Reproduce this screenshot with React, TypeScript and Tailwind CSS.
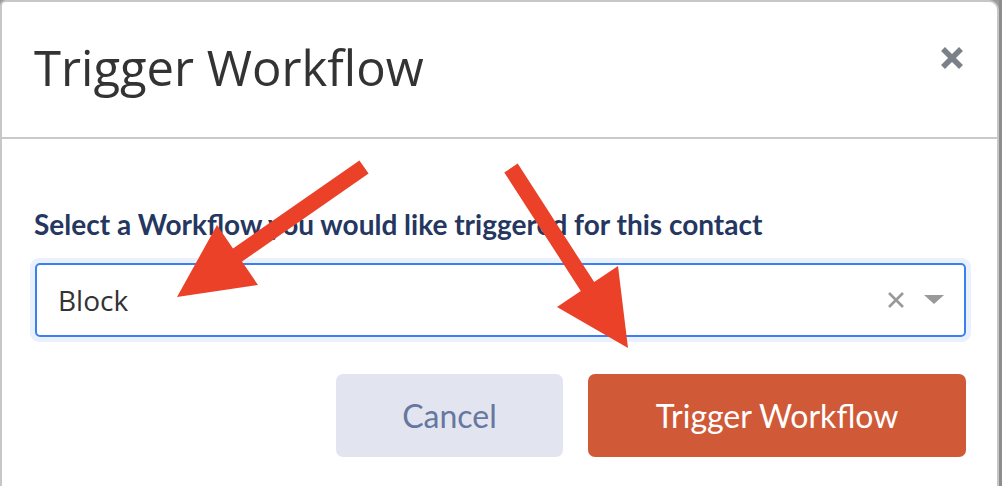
export default function App() {
  return (
    <div className="relative flex w-[1002px] h-[486px] overflow-hidden bg-[#9b9b9b]">
      <div className="flex flex-col w-[999px] h-[520px] bg-white border-l-2 border-t-2 border-r-2 border-[#c7c7c7] rounded-tl-[6px] rounded-tr-[10px]">
        <div className="flex items-center justify-between h-[137px] pl-[32px] pr-[33px] border-b-2 border-[#c9c9c9]">
          <h1 className="text-[49px] leading-none font-medium text-[#333333] font-['Open_Sans',sans-serif] pb-[4px]">
            Trigger Workflow
          </h1>
          <svg width="24" height="24" viewBox="0 0 24 24" className="mb-[24px]">
            <path d="M3 3 L21 21 M21 3 L3 21" stroke="#7b8188" strokeWidth="5.5" strokeLinecap="butt" />
          </svg>
        </div>
        <div className="flex flex-col pt-[71px] pl-[28px] pr-[26px]">
          <label className="pl-[4px] text-[28px] leading-none font-bold text-[#253761] font-['Lato',sans-serif]">
            Select a Workflow you would like triggered for this contact
          </label>
          <div className="mt-[20px] p-[5px] rounded-[9px] bg-[#eaf1fd]">
            <div className="flex items-center h-[74px] pl-[21px] pr-[20px] rounded-[5px] border-2 border-[#3a80f0] bg-white">
              <span className="flex-1 text-[28px] text-[#333333] font-['Open_Sans',sans-serif]">Block</span>
              <svg width="16" height="16" viewBox="0 0 16 16" className="mr-[20px]">
                <path d="M1 1 L15 15 M15 1 L1 15" stroke="#999999" strokeWidth="2.6" />
              </svg>
              <svg width="20" height="10" viewBox="0 0 20 10">
                <path d="M0 0 H20 L10 9 Z" fill="#999999" />
              </svg>
            </div>
          </div>
          <div className="flex justify-end gap-[25px] mt-[32px] pr-[5px]">
            <button className="w-[227px] h-[83px] rounded-[7px] bg-[#e2e5ef] text-[#6677a0] text-[32px] font-['Lato',sans-serif]">
              Cancel
            </button>
            <button className="w-[378px] h-[83px] rounded-[7px] bg-[#d05a38] text-white text-[32px] font-['Lato',sans-serif]">
              Trigger Workflow
            </button>
          </div>
        </div>
      </div>
      <div className="w-[3px] bg-[#8d8d8d]" />
      <svg className="absolute left-0 top-0 pointer-events-none" width="1002" height="486" viewBox="0 0 1002 486">
        <polygon
          points="359.4,160.4 368.6,173.6 242,261.6 258,285 177,297 217,225 233,248.4"
          fill="#ea4128"
        />
        <polygon
          points="504.3,172.4 517.7,163.6 594.2,282.1 618,266 628,348 557,307 580.8,290.9"
          fill="#ea4128"
        />
      </svg>
    </div>
  )
}
